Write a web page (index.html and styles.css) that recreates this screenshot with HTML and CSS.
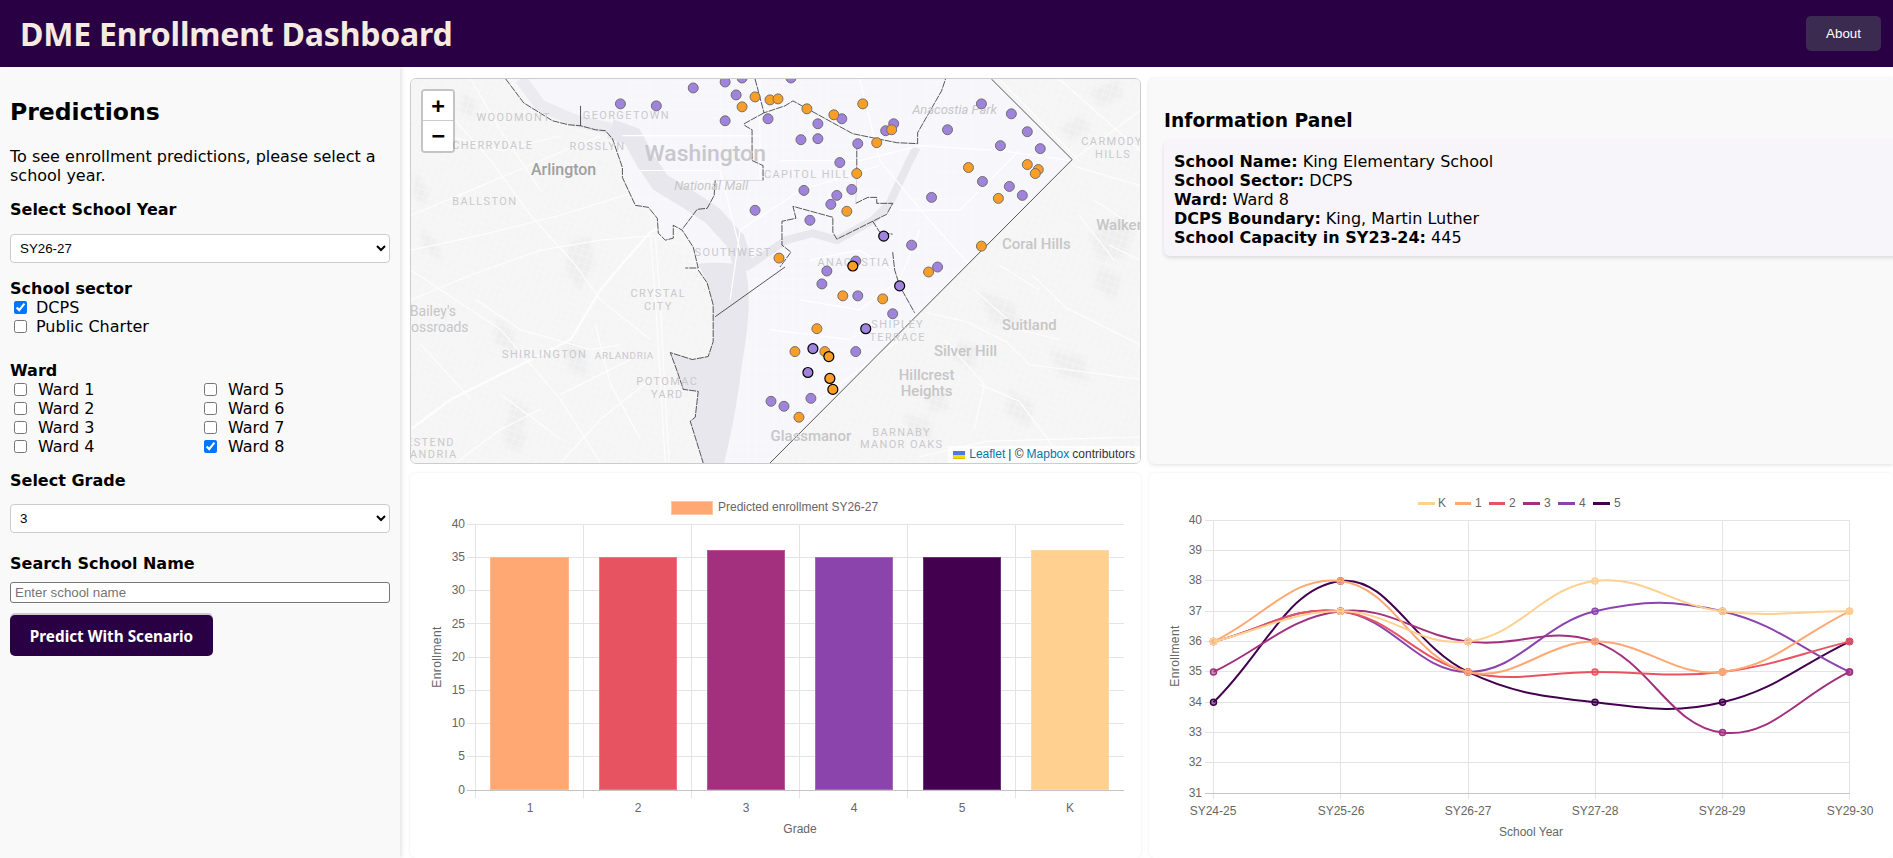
FILE: index.html
```html
<!DOCTYPE html>
<html lang="en">
<head>
  <meta charset="UTF-8">
  <meta name="viewport" content="width=device-width, initial-scale=1.0">
  <title>DME Enrollment Dashboard</title>
  <link rel="stylesheet" href="styles.css">
</head>
<body>
  <header class="topbar">
    <h1 class="title">DME Enrollment Dashboard</h1>
    <button class="about-btn">About</button>
  </header>

  <div class="page">
    <aside class="sidebar">
      <h2 class="side-title">Predictions</h2>
      <p class="side-intro">To see enrollment predictions, please select a school year.</p>

      <h3 class="side-head">Select School Year</h3>
      <select class="side-select"><option>SY26-27</option></select>

      <h4 class="group-head sector-head">School sector</h4>
      <label class="check"><input type="checkbox" checked>DCPS</label>
      <label class="check"><input type="checkbox">Public Charter</label>

      <h4 class="group-head ward-head">Ward</h4>
      <div class="ward-grid">
        <label class="check ward"><input type="checkbox">Ward 1</label>
        <label class="check ward"><input type="checkbox">Ward 5</label>
        <label class="check ward"><input type="checkbox">Ward 2</label>
        <label class="check ward"><input type="checkbox">Ward 6</label>
        <label class="check ward"><input type="checkbox">Ward 3</label>
        <label class="check ward"><input type="checkbox">Ward 7</label>
        <label class="check ward"><input type="checkbox">Ward 4</label>
        <label class="check ward"><input type="checkbox" checked>Ward 8</label>
      </div>

      <h3 class="side-head grade-head">Select Grade</h3>
      <select class="side-select"><option>3</option></select>

      <h3 class="side-head search-head">Search School Name</h3>
      <input class="search" type="text" placeholder="Enter school name">
      <button class="predict-btn">Predict With Scenario</button>
    </aside>

    <main class="content">
      <section class="map-card">
        <svg class="map" viewBox="410 78 731 386" preserveAspectRatio="none">
          <defs>
            <pattern id="streets" width="7" height="7" patternUnits="userSpaceOnUse" patternTransform="rotate(18)">
              <path d="M0 0H7M0 0V7" class="street-grid"/>
            </pattern>
            <pattern id="dcstreets" width="9" height="9" patternUnits="userSpaceOnUse">
              <path d="M0 0H9M0 0V9" class="street-grid-dc"/>
            </pattern>
            <clipPath id="dc-clip">
              <path d="M622 78V177L713 305V464H770L1073 159 992 78Z"/>
            </clipPath>
          </defs>

          <rect class="land" x="410" y="78" width="731" height="386"/>

          <!-- darker patches outside the district -->
          <g class="patch">
            <path d="M462 92l14 10-4 16-14-8zM414 170l14 22-6 14-10-10zM420 228l16 14 4 20-18-14zM560 340l22 8 6 30-18-6z"/>
            <path d="M568 242l22-6 4 28-16 26-12-20zM496 318l16 14 4 22-22-10zM510 400l18 8-4 22-16-6zM506 420l20 16-8 18-14-10z"/>
            <path d="M1090 235l30-20 14 18-8 24-26 4zM1060 128l22-14 10 14-20 12zM1090 90l30-12 4 18-24 10z"/>
            <path d="M980 290l34 14 8 22-30-2zM1010 390l24 14-4 24-24-14zM960 340l20 8-8 22-18-10zM905 415l24 4 4 22-24-6z"/>
            <path d="M1050 350l34 8 6 24-30-6zM1100 265l22 12-6 24-20-14zM925 395l18-2 8 16-20 4z"/>
          </g>
          <rect fill="url(#streets)" x="410" y="78" width="731" height="386"/>

          <g class="roads">
            <path class="road-big" d="M410 430L450 400 520 365 570 340 600 290 625 260 650 232 672 220"/>
            <path d="M410 215L470 190 540 160 600 135M410 250L480 235 560 215 640 190M455 120L490 160 530 215 575 265 600 300 650 340"/>
            <path d="M410 300L470 275 540 250 600 240 660 235M410 270L500 330 560 400 600 464M650 235L655 300 660 380 665 464M655 235L660 300 664 380 669 464"/>
            <path d="M560 464L600 420 650 380M470 78L500 130 540 190M430 130L500 150 560 135M548 78L600 120M500 395L560 440M420 345L470 400"/>
            <path d="M560 395L640 355M595 325L610 385 640 440M475 300L520 330 590 350 620 345M455 464L500 430 540 410"/>
            <path d="M1073 160L1141 110M1000 78L1080 160M1073 165L1141 185M1060 78L1141 150M1095 200L1141 230"/>
            <path d="M927 313L967 322 1007 342 1030 365 1141 380M1033 275L1067 308 1141 345M980 385L1020 402 1047 438 1065 464"/>
            <path d="M920 458L987 442 1141 438M975 290L1020 330 1060 340M945 340L985 385 975 430M1000 265L1040 290M1110 245L1141 260M1080 215L1115 260"/>
          </g>

          <path class="district" d="M505 78L523 102 552 120 568 124 580 125 595 129 605 130 612 138 622 167 622 177 635 205 648 207 657 218 658 233 665 240 673 238 673 225 682 230 693 247 698 268 707 283 713 305 713 342 708 357 692 360 670 353 677 372 683 390 698 392 695 418 690 422 695 438 703 464H770L1073 159 992 78Z"/>
          <rect fill="url(#dcstreets)" x="620" y="78" width="360" height="386" clip-path="url(#dc-clip)"/>

          <g class="water">
            <path d="M698 264C708 262 730 262 745 266 752 300 748 330 741 370 738 400 730 440 724 464H703L695 438 690 422 695 418 698 392 683 390 677 372 670 353 692 360 708 357 713 342 713 305 707 283Z"/>
            <path class="river" d="M610 128L632 136 645 160 660 182 685 197 712 215 735 240 745 270"/>
            <path class="river-thin" d="M745 268L786 240 813 233 837 240 873 220 890 203 910 160 917 147"/>
            <path class="river-north" d="M520 78L540 105 575 120 610 128"/>
          </g>

          <g class="roads roads-dc">
            <path d="M622 135H760M760 78V180M640 170H720L740 250M780 160H860L920 145 1000 150 1072 160M730 300L740 230 800 190 880 165M860 78L880 160 930 220 970 265"/>
            <path d="M900 210L960 210 1020 150M800 300L860 310 900 280 920 230M790 440L820 400 860 370 900 340M770 330L850 340 880 320M810 260L860 250 890 270"/>
          </g>

          <g class="bounds">
            <path d="M505 78L523 102 552 120 568 124 580 125 595 129 605 130 612 138 622 167 622 177 635 205 648 207 657 218 658 233 665 240 673 238 673 225 682 230 693 247 698 268 685 268M698 270L707 283 713 305 713 342 708 357 692 360 670 353 677 372 683 390 698 392 695 418 690 422 695 438 703 464"/>
            <path class="bound-solid" d="M580 105V125M992 78L1073 159 770 464M715 317L785 267"/>
            <path d="M755 78L764 112 785 105 793 100 853 133 897 142 918 143 918 132 942 90 946 78M764 112L744 123 745 125 752 129 752 160 763 165 763 180"/>
            <path class="bound-faint" d="M763 180H715"/>
            <path d="M715 180L714 195 707 208 697 209 682 229M857 142V173"/>
            <path class="bound-faint" d="M857 173L856 203"/>
            <path d="M856 203L868 197 877 197 877 203 893 203 887 214 873 221 837 239 833 232 833 217 793 206 796 218 782 221 782 245 791 252 780 267"/>
            <path d="M873 221L880 232 893 234M893 252L895 270 900 286 915 313"/>
          </g>

          <g class="labels">
            <text class="lbl" x="626" y="118">GEORGETOWN</text>
            <text class="lbl" x="513" y="120">WOODMONT</text>
            <text class="lbl" x="492" y="148">CHERRYDALE</text>
            <text class="lbl" x="597" y="149">ROSSLYN</text>
            <text class="lbl" x="484" y="205">BALLSTON</text>
            <text class="lbl" x="733" y="256">SOUTHWEST</text>
            <text class="lbl" x="807" y="178">CAPITOL HILL</text>
            <text class="lbl" x="854" y="266">ANACOSTIA</text>
            <text class="lbl" x="1113" y="144">CARMODY</text>
            <text class="lbl" x="1114" y="157">HILLS</text>
            <text class="lbl" x="658" y="297">CRYSTAL</text>
            <text class="lbl" x="658" y="310">CITY</text>
            <text class="lbl" x="544" y="358">SHIRLINGTON</text>
            <text class="lbl lbl-small" x="624" y="359">ARLANDRIA</text>
            <text class="lbl" x="667" y="386">POTOMAC</text>
            <text class="lbl" x="667" y="399">YARD</text>
            <text class="lbl" x="424" y="447">WESTEND</text>
            <text class="lbl" x="417" y="459">ALEXANDRIA</text>
            <text class="lbl" x="898" y="328">SHIPLEY</text>
            <text class="lbl" x="898" y="341">TERRACE</text>
            <text class="lbl" x="902" y="437">BARNABY</text>
            <text class="lbl" x="902" y="449">MANOR OAKS</text>
            <text class="place place-big" x="705" y="160">Washington</text>
            <text class="place place-dark" x="563" y="175">Arlington</text>
            <text class="place place-it" x="711" y="190">National Mall</text>
            <text class="place place-it" x="955" y="113">Anacostia Park</text>
            <text class="place" x="1120" y="230">Walker</text>
            <text class="place" x="1037" y="249">Coral Hills</text>
            <text class="place place-small" x="432" y="316">Bailey's</text>
            <text class="place place-small" x="432" y="332">Crossroads</text>
            <text class="place" x="1030" y="330">Suitland</text>
            <text class="place" x="966" y="356">Silver Hill</text>
            <text class="place" x="927" y="381">Hillcrest</text>
            <text class="place" x="927" y="397">Heights</text>
            <text class="place" x="811" y="442">Glassmanor</text>
          </g>

          <g class="dots-p">
            <circle cx="620" cy="103" r="5"/><circle cx="656" cy="105" r="5"/><circle cx="693" cy="87" r="5"/>
            <circle cx="725" cy="81" r="5"/><circle cx="742" cy="77" r="5"/><circle cx="736" cy="94" r="5"/>
            <circle cx="725" cy="120" r="5"/><circle cx="768" cy="118" r="5"/><circle cx="755" cy="210" r="5"/>
            <circle cx="791" cy="77" r="5"/><circle cx="818" cy="123" r="5"/><circle cx="842" cy="118" r="5"/>
            <circle cx="801" cy="139" r="5"/><circle cx="818" cy="138" r="5"/><circle cx="886" cy="130" r="5"/>
            <circle cx="858" cy="143" r="5"/><circle cx="948" cy="129" r="5"/><circle cx="982" cy="103" r="5"/>
            <circle cx="1012" cy="113" r="5"/><circle cx="1028" cy="131" r="5"/><circle cx="1001" cy="145" r="5"/>
            <circle cx="1041" cy="148" r="5"/><circle cx="840" cy="162" r="5"/><circle cx="983" cy="181" r="5"/>
            <circle cx="1010" cy="186" r="5"/><circle cx="1023" cy="195" r="5"/><circle cx="804" cy="190" r="5"/>
            <circle cx="852" cy="189" r="5"/><circle cx="837" cy="195" r="5"/><circle cx="831" cy="204" r="5"/>
            <circle cx="932" cy="197" r="5"/><circle cx="810" cy="220" r="5"/><circle cx="912" cy="245" r="5"/>
            <circle cx="856" cy="261" r="5"/><circle cx="827" cy="271" r="5"/><circle cx="938" cy="267" r="5"/>
            <circle cx="822" cy="284" r="5"/><circle cx="858" cy="296" r="5"/><circle cx="893" cy="314" r="5"/>
            <circle cx="856" cy="352" r="5"/><circle cx="811" cy="399" r="5"/><circle cx="784" cy="407" r="5"/>
            <circle cx="771" cy="402" r="5"/>
          </g>
          <g class="dots-o">
            <circle cx="755" cy="96" r="5"/><circle cx="742" cy="106" r="5"/><circle cx="770" cy="99" r="5"/>
            <circle cx="778" cy="98" r="5"/><circle cx="779" cy="258" r="5"/><circle cx="807" cy="108" r="5"/>
            <circle cx="863" cy="103" r="5"/><circle cx="834" cy="114" r="5"/><circle cx="877" cy="142" r="5"/>
            <circle cx="969" cy="167" r="5"/><circle cx="1028" cy="164" r="5"/><circle cx="1039" cy="169" r="5"/>
            <circle cx="1036" cy="173" r="5"/><circle cx="857" cy="173" r="5"/><circle cx="999" cy="198" r="5"/>
            <circle cx="847" cy="211" r="5"/><circle cx="982" cy="246" r="5"/><circle cx="929" cy="272" r="5"/>
            <circle cx="843" cy="296" r="5"/><circle cx="883" cy="299" r="5"/><circle cx="817" cy="329" r="5"/>
            <circle cx="795" cy="352" r="5"/><circle cx="825" cy="352" r="5"/><circle cx="799" cy="418" r="5"/>
          </g>
          <g class="dots-p"><circle cx="894" cy="123" r="5"/></g>
          <g class="dots-o"><circle cx="892" cy="129" r="5"/></g>
          <g class="dots-p dots-sel">
            <circle cx="884" cy="236" r="5"/><circle cx="900" cy="286" r="5"/><circle cx="866" cy="329" r="5"/>
            <circle cx="813" cy="349" r="5"/><circle cx="808" cy="373" r="5"/>
          </g>
          <g class="dots-o dots-sel">
            <circle cx="853" cy="266" r="5"/><circle cx="829" cy="357" r="5"/><circle cx="830" cy="379" r="5"/>
            <circle cx="833" cy="390" r="5"/>
          </g>
        </svg>

        <div class="zoom-ctl">
          <a class="zoom-btn">+</a>
          <a class="zoom-btn">&minus;</a>
        </div>
        <div class="attribution">
          <svg class="flag" viewBox="0 0 12 8"><path fill="#4C7BE1" d="M0 0h12v4H0z"/><path fill="#FFD500" d="M0 4h12v3H0z"/><path fill="#E0BC00" d="M0 7h12v1H0z"/></svg>
          <a>Leaflet</a> | &copy; <a>Mapbox</a> contributors
        </div>
      </section>

      <section class="info-card">
        <h3 class="info-title">Information Panel</h3>
        <div class="info-box">
          <div><b>School Name:</b> King Elementary School</div>
          <div><b>School Sector:</b> DCPS</div>
          <div><b>Ward:</b> Ward 8</div>
          <div><b>DCPS Boundary:</b> King, Martin Luther</div>
          <div><b>School Capacity in SY23-24:</b> 445</div>
        </div>
      </section>

      <section class="chart-card">
        <svg class="chart" viewBox="410 473 731 385" preserveAspectRatio="none">
          <rect class="legend-box" x="671.5" y="501.5" width="41" height="13"/>
          <text class="tick" x="718" y="511">Predicted enrollment SY26-27</text>

          <path class="grid" d="M467 524.5H1124M467 557.5H1124M467 590.5H1124M467 623.5H1124M467 657.5H1124M467 690.5H1124M467 723.5H1124M467 756.5H1124"/>
          <path class="grid" d="M475.5 524V798M583.5 524V798M691.5 524V798M799.5 524V798M907.5 524V798M1015.5 524V798"/>
          <path class="axis" d="M467 790.5H1124"/>

          <rect class="bar bar-1" x="490.5" y="557.5" width="78" height="232"/>
          <rect class="bar bar-2" x="599.5" y="557.5" width="77" height="232"/>
          <rect class="bar bar-3" x="707.5" y="550.5" width="77" height="239"/>
          <rect class="bar bar-4" x="815.5" y="557.5" width="77" height="232"/>
          <rect class="bar bar-5" x="923.5" y="557.5" width="77" height="232"/>
          <rect class="bar bar-k" x="1031.5" y="550.5" width="77" height="239"/>

          <g class="ticks-y">
            <text x="465" y="528">40</text><text x="465" y="561">35</text><text x="465" y="594">30</text>
            <text x="465" y="628">25</text><text x="465" y="661">20</text><text x="465" y="694">15</text>
            <text x="465" y="727">10</text><text x="465" y="760">5</text><text x="465" y="794">0</text>
          </g>
          <g class="ticks-x">
            <text x="530" y="812">1</text><text x="638" y="812">2</text><text x="746" y="812">3</text>
            <text x="854" y="812">4</text><text x="962" y="812">5</text><text x="1070" y="812">K</text>
            <text x="800" y="833">Grade</text>
          </g>
          <text class="axis-title" transform="translate(441 657) rotate(-90)">Enrollment</text>
        </svg>
      </section>

      <section class="chart-card">
        <svg class="chart" viewBox="1149 473 744 385" preserveAspectRatio="none">
          <g class="line-legend">
            <path class="lg-k" d="M1418 503.5H1435"/><path class="lg-1" d="M1455 503.5H1471"/><path class="lg-2" d="M1489 503.5H1505"/>
            <path class="lg-3" d="M1523 503.5H1540"/><path class="lg-4" d="M1558 503.5H1575"/><path class="lg-5" d="M1593 503.5H1610"/>
          </g>
          <g class="tick">
            <text x="1438" y="507">K</text><text x="1475" y="507">1</text><text x="1509" y="507">2</text>
            <text x="1544" y="507">3</text><text x="1579" y="507">4</text><text x="1614" y="507">5</text>
          </g>

          <path class="grid" d="M1205 520.5H1850M1205 550.5H1850M1205 580.5H1850M1205 611.5H1850M1205 641.5H1850M1205 671.5H1850M1205 702.5H1850M1205 732.5H1850M1205 762.5H1850"/>
          <path class="grid" d="M1213.5 520V799M1340.5 520V799M1468.5 520V799M1595.5 520V799M1722.5 520V799M1849.5 520V799"/>
          <path class="axis" d="M1205 793.5H1850"/>

          <g id="line-series"></g>

          <g class="ticks-y">
            <text x="1202" y="524">40</text><text x="1202" y="554">39</text><text x="1202" y="584">38</text>
            <text x="1202" y="615">37</text><text x="1202" y="645">36</text><text x="1202" y="675">35</text>
            <text x="1202" y="706">34</text><text x="1202" y="736">33</text><text x="1202" y="766">32</text>
            <text x="1202" y="797">31</text>
          </g>
          <g class="ticks-x">
            <text x="1213" y="815">SY24-25</text><text x="1341" y="815">SY25-26</text><text x="1468" y="815">SY26-27</text>
            <text x="1595" y="815">SY27-28</text><text x="1722" y="815">SY28-29</text><text x="1850" y="815">SY29-30</text>
            <text x="1531" y="836">School Year</text>
          </g>
          <text class="axis-title" transform="translate(1179 656) rotate(-90)">Enrollment</text>
        </svg>
      </section>
    </main>
  </div>

  <script src="charts.js"></script>
</body>
</html>
```

FILE: styles.css
```css
* {
  box-sizing: border-box;
}

html, body {
  margin: 0;
  height: 100%;
  overflow: hidden;
}

body {
  display: flex;
  flex-direction: column;
  background-color: #fff;
  font-family: "DejaVu Sans", Verdana, sans-serif;
  font-size: 16px;
  line-height: 19px;
  color: #000;
}

.topbar {
  flex: none;
  display: flex;
  align-items: center;
  justify-content: space-between;
  height: 67px;
  padding: 0 12px 0 20px;
  background-color: #2a0045;
}

.title {
  margin: 0;
  font-family: "Noto Sans", sans-serif;
  font-size: 32px;
  font-weight: 700;
  letter-spacing: -0.2px;
  color: #f5ebe0;
}

.about-btn {
  width: 75px;
  height: 35px;
  border: none;
  border-radius: 5px;
  background-color: #3c2b50;
  color: #fff;
  font-family: "Liberation Sans", Arial, sans-serif;
  font-size: 13.33px;
}

.page {
  flex: 1;
  display: flex;
  min-height: 0;
}

/* sidebar */
.sidebar {
  flex: none;
  width: 400px;
  padding: 31px 10px 0;
  background-color: #f9f9f9;
  box-shadow: 2px 0 4px rgba(0, 0, 0, 0.1);
}

.side-title {
  margin: 0;
  font-size: 23.5px;
  line-height: 28px;
}

.side-intro {
  margin: 21px 0 0;
}

.side-head {
  margin: 15px 0 0;
  font-size: 16px;
  line-height: 20px;
}

.side-select {
  display: block;
  width: 100%;
  height: 29px;
  margin-top: 14px;
  padding: 0 5px;
  border: 1px solid #ccc;
  border-radius: 4px;
  background-color: #fff;
  font-family: "Liberation Sans", Arial, sans-serif;
  font-size: 13.33px;
}

.group-head {
  margin: 16px 0 0;
  font-size: 16px;
}

.ward-head {
  margin-top: 25px;
}

.check {
  display: flex;
  align-items: center;
}

.check input {
  width: 13px;
  height: 13px;
  margin: 0 9px 0 4px;
}

.ward input {
  margin-right: 11px;
}

.ward-grid {
  display: grid;
  grid-template-columns: 190px 1fr;
}

.grade-head {
  margin-bottom: -1px;
}

.search-head {
  margin-top: 21px;
  margin-bottom: -1px;
}

.search {
  display: block;
  width: 100%;
  height: 21px;
  margin-top: 9px;
  padding: 1px 4px;
  border: 1px solid #767676;
  border-radius: 3px;
  font-family: "Liberation Sans", Arial, sans-serif;
  font-size: 13.33px;
}

.predict-btn {
  display: block;
  width: 203px;
  height: 41px;
  margin-top: 12px;
  border: none;
  border-radius: 5px;
  background-color: #2a0045;
  box-shadow: 0 -2px 0 #ccc;
  color: #fff;
  font-family: "Noto Sans", sans-serif;
  font-size: 15.3px;
  font-weight: 700;
}

/* main area */
.content {
  flex: 1;
  min-width: 0;
  display: grid;
  grid-template-columns: 731px 1fr;
  grid-template-rows: 386px 1fr;
  gap: 9px 8px;
  padding: 11px 0 0 10px;
}

.map-card {
  position: relative;
  overflow: hidden;
  border: 1px solid #ccc;
  border-radius: 6px;
}

.map {
  display: block;
  width: 100%;
  height: 100%;
}

.land {
  fill: #f5f5f5;
}

.street-grid {
  fill: none;
  stroke: #fbfbfb;
  stroke-width: 0.8;
}

.street-grid-dc {
  fill: none;
  stroke: #fbfaff;
  stroke-width: 0.7;
}

.patch {
  fill: #eeeeee;
  filter: blur(2px);
}

.roads {
  fill: none;
  stroke: #fdfdfd;
  stroke-width: 1.2;
}

.road-big {
  stroke-width: 2.5;
}

.roads-dc {
  stroke: #fff;
  stroke-width: 1.2;
}

.district {
  fill: #f7f6fb;
}

.water path {
  fill: #e8e7ed;
}

.water .river {
  fill: none;
  stroke: #e8e7ed;
  stroke-width: 20;
}

.water .river-thin {
  fill: none;
  stroke: #e8e7ed;
  stroke-width: 8;
}

.water .river-north {
  fill: none;
  stroke: #ecebf0;
  stroke-width: 12;
}

.bounds {
  fill: none;
  stroke: #111;
  stroke-width: 0.7;
  stroke-dasharray: 7 1;
}

.bounds .bound-solid {
  stroke-dasharray: none;
}

.bounds .bound-faint {
  stroke: #cfcfd6;
  stroke-dasharray: none;
}

.labels text {
  text-anchor: middle;
}

.lbl {
  font-family: Roboto, sans-serif;
  font-size: 11px;
  letter-spacing: 1.4px;
  fill: #c9c9cd;
}

.lbl-small {
  font-size: 10px;
  letter-spacing: 0.6px;
}

.place {
  font-family: Roboto, sans-serif;
  font-size: 15px;
  font-weight: 500;
  fill: #c6c6c8;
}

.place-big {
  font-size: 23px;
  fill: #c8c7cd;
}

.place-dark {
  font-size: 16px;
  fill: #a0a0a0;
}

.place-it {
  font-size: 13px;
  font-style: italic;
  font-weight: 400;
}

.place-small {
  font-size: 14px;
  font-weight: 400;
}

.dots-p circle,
.dots-o circle {
  stroke: #6e6e6e;
  stroke-width: 1;
}

.dots-p circle {
  fill: #a083dc;
}

.dots-o circle {
  fill: #fb9e27;
}

.dots-sel circle {
  stroke: #000;
  stroke-width: 1.2;
}

.zoom-ctl {
  position: absolute;
  top: 10px;
  left: 10px;
  width: 34px;
  border: 2px solid rgba(0, 0, 0, 0.2);
  border-radius: 4px;
  background-clip: padding-box;
}

.zoom-btn {
  display: block;
  height: 30px;
  background-color: #fff;
  font-family: "DejaVu Sans Mono", monospace;
  font-size: 22px;
  font-weight: 700;
  line-height: 30px;
  text-align: center;
  color: #000;
}

.zoom-btn:first-child {
  border-bottom: 1px solid #ccc;
  border-radius: 2px 2px 0 0;
}

.zoom-btn:last-child {
  border-radius: 0 0 2px 2px;
}

.attribution {
  position: absolute;
  right: 0;
  bottom: 0;
  display: flex;
  align-items: center;
  gap: 3px;
  height: 17px;
  padding: 0 5px;
  background-color: rgba(255, 255, 255, 0.8);
  font-family: "Liberation Sans", Arial, sans-serif;
  font-size: 12px;
  color: #333;
}

.attribution a {
  color: #0078a8;
}

.flag {
  width: 12px;
  height: 8px;
  margin-right: 1px;
}

.info-card {
  overflow: hidden;
  padding-left: 15px;
  border-radius: 6px 0 0 6px;
  background-color: #f9f9f9;
  box-shadow: 0 1px 4px rgba(0, 0, 0, 0.12);
}

.info-title {
  margin: 32px 0 0;
  font-size: 18.7px;
  line-height: 22px;
}

.info-box {
  height: 116px;
  margin: 8px -10px 0 0;
  padding: 12px 10px 0;
  border-radius: 6px;
  background-color: #f7f5f9;
  box-shadow: 0 2px 4px rgba(0, 0, 0, 0.12);
}

.chart-card {
  min-height: 0;
  border-radius: 6px;
  background-color: #fff;
  box-shadow: 0 0 3px rgba(0, 0, 0, 0.08);
}

.chart {
  display: block;
  width: 100%;
  height: 100%;
}

.chart text {
  font-family: "Liberation Sans", Arial, sans-serif;
  font-size: 12px;
  fill: #666;
}

.grid {
  fill: none;
  stroke: #e4e4e4;
  stroke-width: 1;
}

.axis {
  stroke: #c4c4c4;
  stroke-width: 1;
}

.ticks-y text {
  text-anchor: end;
}

.ticks-x text {
  text-anchor: middle;
}

.chart .axis-title {
  text-anchor: middle;
  letter-spacing: 0.4px;
}

.legend-box {
  fill: #ffa873;
  stroke: #ffc6a3;
}

.bar {
  stroke-width: 1;
}

.bar-1 { fill: #ffa873; stroke: #ffb98e; }
.bar-2 { fill: #e85362; stroke: #ee7581; }
.bar-3 { fill: #a3307e; stroke: #b8599a; }
.bar-4 { fill: #8c44ad; stroke: #a269bd; }
.bar-5 { fill: #42004f; stroke: #683372; }
.bar-k { fill: #ffd08f; stroke: #ffd9a5; }

.line-legend path {
  fill: none;
  stroke-width: 3;
}

.lg-k { stroke: #ffd08f; }
.lg-1 { stroke: #ffa873; }
.lg-2 { stroke: #e85362; }
.lg-3 { stroke: #a3307e; }
.lg-4 { stroke: #8c44ad; }
.lg-5 { stroke: #42004f; }
```

FILE: charts.js
```js
// line chart: same curve maths as chart.js with tension 0.4
const svgNS = "http://www.w3.org/2000/svg";
const xs = [1213.5, 1340.5, 1468, 1595, 1722.5, 1849.5];
const yFor = (v) => 520.3 + (40 - v) * 30.33;

const series = [
  { color: "#42004f", data: [34, 38, 35, 34, 34, 36] },
  { color: "#8c44ad", data: [36, 37, 35, 37, 37, 35] },
  { color: "#a3307e", data: [35, 37, 36, 36, 33, 35] },
  { color: "#e85362", data: [36, 37, 35, 35, 35, 36] },
  { color: "#ffa873", data: [36, 38, 35, 36, 35, 37] },
  { color: "#ffd08f", data: [36, 37, 36, 38, 37, 37] },
];

function curvePath(pts) {
  const t = 0.4;
  const ctrl = pts.map((p, i) => {
    const prev = pts[i - 1] || p;
    const next = pts[i + 1] || p;
    const d01 = Math.hypot(p.x - prev.x, p.y - prev.y);
    const d12 = Math.hypot(next.x - p.x, next.y - p.y);
    const sum = d01 + d12;
    const fa = (t * d01) / sum;
    const fb = (t * d12) / sum;
    return {
      inX: p.x - fa * (next.x - prev.x),
      inY: p.y - fa * (next.y - prev.y),
      outX: p.x + fb * (next.x - prev.x),
      outY: p.y + fb * (next.y - prev.y),
    };
  });

  let d = `M${pts[0].x} ${pts[0].y}`;
  for (let i = 1; i < pts.length; i++) {
    d += `C${ctrl[i - 1].outX} ${ctrl[i - 1].outY} ${ctrl[i].inX} ${ctrl[i].inY} ${pts[i].x} ${pts[i].y}`;
  }
  return d;
}

const holder = document.getElementById("line-series");

series.forEach((s) => {
  const pts = s.data.map((v, i) => ({ x: xs[i], y: yFor(v) }));

  const line = document.createElementNS(svgNS, "path");
  line.setAttribute("d", curvePath(pts));
  line.setAttribute("fill", "none");
  line.setAttribute("stroke", s.color);
  line.setAttribute("stroke-width", "2");
  holder.appendChild(line);

  pts.forEach((p) => {
    const dot = document.createElementNS(svgNS, "circle");
    dot.setAttribute("cx", p.x);
    dot.setAttribute("cy", p.y);
    dot.setAttribute("r", "3");
    dot.setAttribute("fill", s.color);
    dot.setAttribute("fill-opacity", "0.5");
    dot.setAttribute("stroke", s.color);
    dot.setAttribute("stroke-width", "1.5");
    holder.appendChild(dot);
  });
});
```
